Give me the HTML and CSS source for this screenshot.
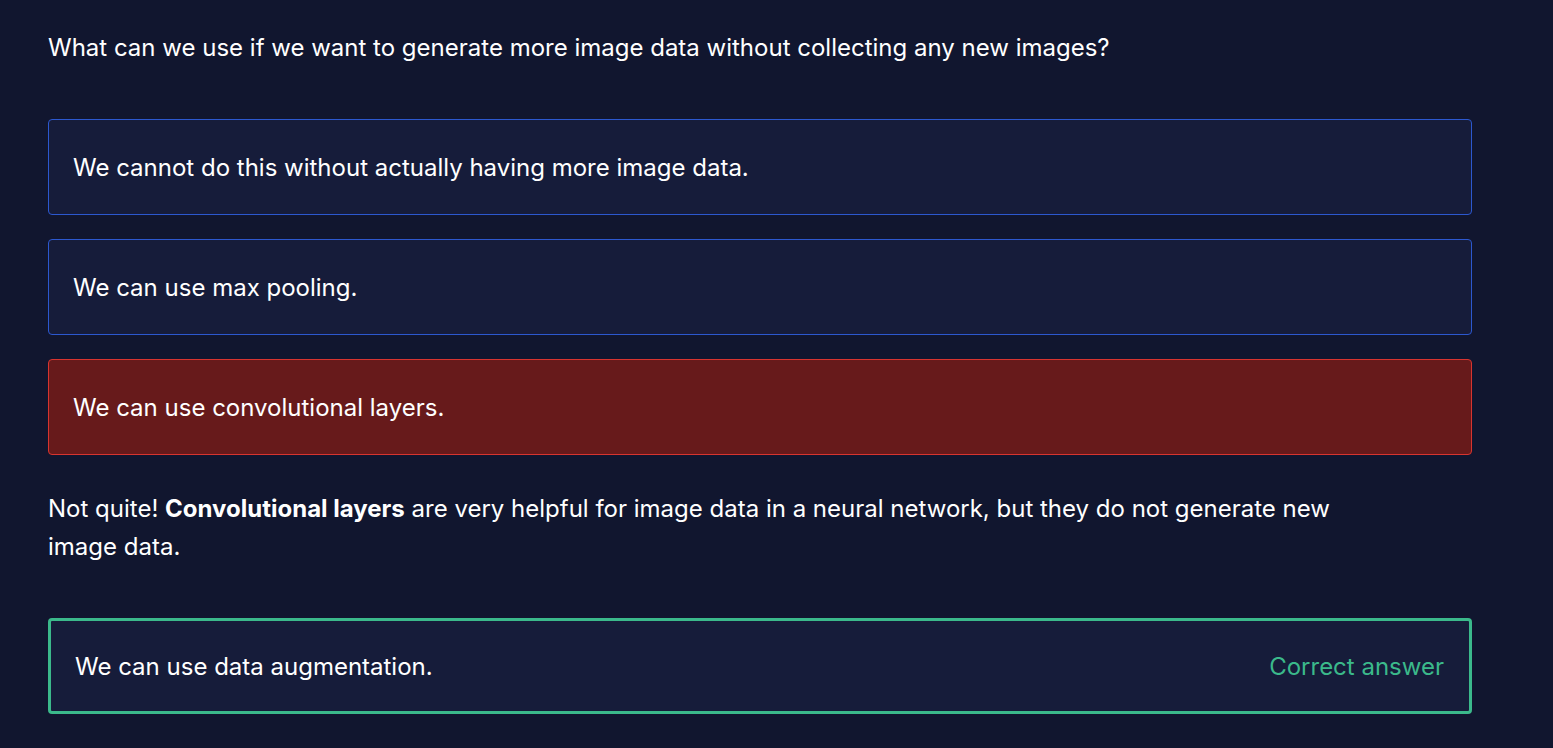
FILE: index.html
```html
<!DOCTYPE html>
<html lang="en">
<head>
<meta charset="utf-8">
<title>Quiz</title>
<link rel="stylesheet" href="styles.css">
</head>
<body>
<main class="quiz">
  <p class="question">What can we use if we want to generate more image data without collecting any new images?</p>
  <div class="options">
    <div class="option">We cannot do this without actually having more image data.</div>
    <div class="option">We can use max pooling.</div>
    <div class="option option-wrong">We can use convolutional layers.</div>
  </div>
  <p class="feedback">Not quite! <strong>Convolutional layers</strong> are very helpful for image data in a neural network, but they do not generate new image data.</p>
  <div class="option option-correct">
    <span>We can use data augmentation.</span>
    <span class="correct-label">Correct answer</span>
  </div>
</main>
</body>
</html>
```

FILE: styles.css
```css
html, body {
  margin: 0;
  padding: 0;
  background: #11162f;
}
body {
  font-family: "Inter", "Liberation Sans", sans-serif;
  color: #ffffff;
  font-size: 24px;
}
.quiz {
  width: 1424px;
  padding: 30px 0 0 48px;
}
.question {
  margin: 0 0 53px 0;
  line-height: 36px;
}
.options {
  display: flex;
  flex-direction: column;
  gap: 24px;
}
.option {
  box-sizing: border-box;
  height: 96px;
  display: flex;
  align-items: center;
  justify-content: space-between;
  padding: 0 24px;
  background: #161c3a;
  border: 1px solid #2c58cf;
  border-radius: 4px;
}
.option-wrong {
  background: #671a1b;
  border-color: #d8342f;
}
.feedback {
  margin: 35px 0 52px 0;
  width: 1330px;
  line-height: 38px;
}
.option-correct {
  border: 3px solid #3bb98b;
  padding: 0 25px 0 24px;
}
.correct-label {
  color: #3bb98b;
}
```
